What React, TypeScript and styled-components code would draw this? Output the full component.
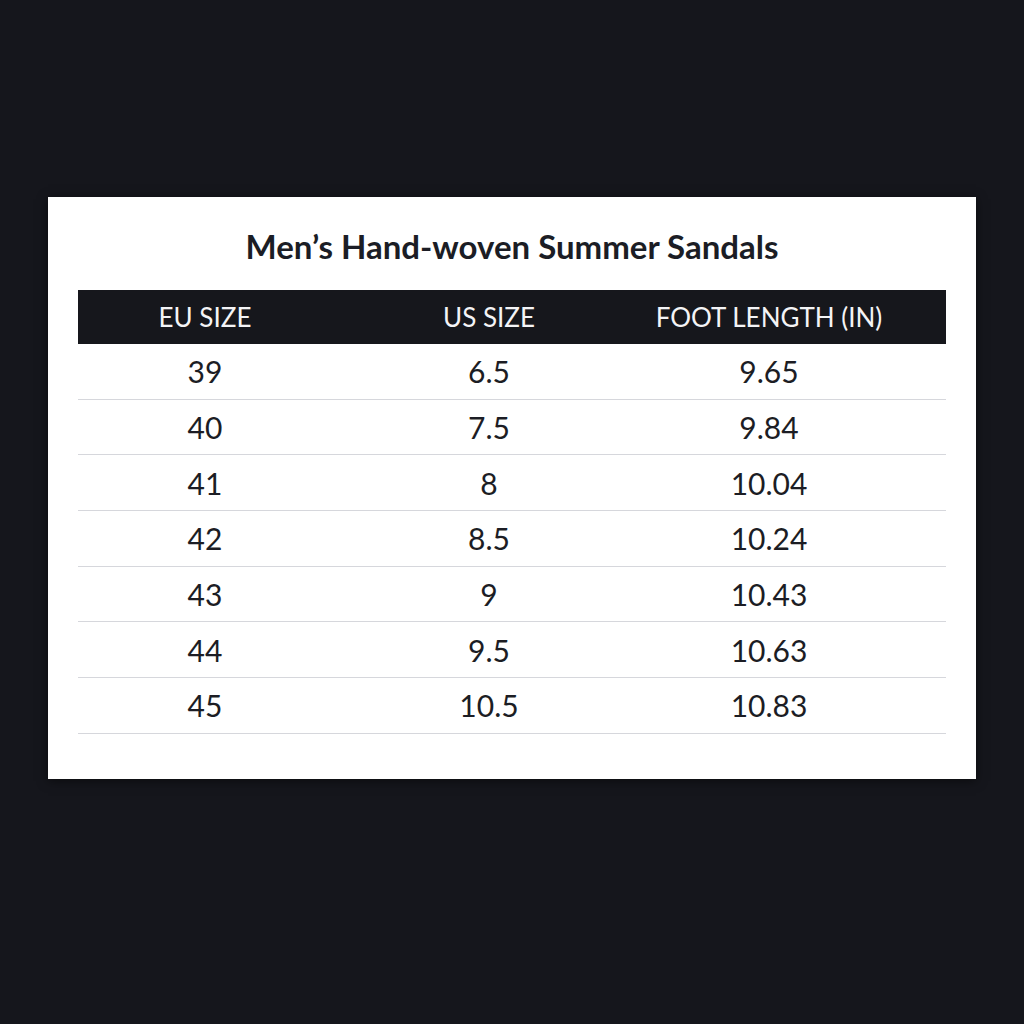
import React from 'react';
import styled, { createGlobalStyle } from 'styled-components';

const GlobalStyle = createGlobalStyle`
  html, body {
    margin: 0;
    padding: 0;
    background: #15161c;
  }
  body {
    font-family: Lato, "Noto Sans", "Liberation Sans", sans-serif;
  }
`;

const rows = [
  ['39', '6.5', '9.65'],
  ['40', '7.5', '9.84'],
  ['41', '8', '10.04'],
  ['42', '8.5', '10.24'],
  ['43', '9', '10.43'],
  ['44', '9.5', '10.63'],
  ['45', '10.5', '10.83'],
];

const headers = ['EU SIZE', 'US SIZE', 'FOOT LENGTH (IN)'];

export default function App() {
  return (
    <>
      <GlobalStyle />
      <Page>
        <Card>
          <Title>Men’s Hand-woven Summer Sandals</Title>
          <Table>
            <HeadRow>
              {headers.map(h => (
                <Cell key={h}>{h}</Cell>
              ))}
            </HeadRow>
            {rows.map(r => (
              <BodyRow key={r[0]}>
                {r.map((v, i) => (
                  <Cell key={i}>{v}</Cell>
                ))}
              </BodyRow>
            ))}
          </Table>
        </Card>
      </Page>
    </>
  );
}

const Page = styled.main`
  width: 1024px;
  height: 1024px;
  display: flex;
  justify-content: center;
  padding-top: 197px;
  box-sizing: border-box;
  background: #15161c;
`;

const Card = styled.section`
  width: 928px;
  height: 582px;
  box-sizing: border-box;
  background: #fff;
  padding: 26px 30px 0;
  box-shadow: 0 2px 10px rgba(0, 0, 0, 0.5);
`;

const Title = styled.h1`
  margin: 0 0 20px;
  height: 47px;
  line-height: 47px;
  text-align: center;
  font-size: 33px;
  font-weight: 700;
  color: #1b1d25;
  letter-spacing: 0;
`;

const Table = styled.div`
  display: flex;
  flex-direction: column;
`;

const rowGrid = `
  display: grid;
  grid-template-columns: 254px 314px 246px;
  padding-right: 54px;
  align-items: center;
  justify-items: center;
`;

const HeadRow = styled.div`
  ${rowGrid}
  height: 54px;
  background: #16171c;
  color: #f4f4f6;
  font-size: 26px;
  font-weight: 400;
`;

const BodyRow = styled.div`
  ${rowGrid}
  height: 54.7px;
  border-bottom: 1.5px solid #d6d7dc;
  color: #1c1d24;
  font-size: 30px;
`;

const Cell = styled.div`
  white-space: nowrap;
`;
